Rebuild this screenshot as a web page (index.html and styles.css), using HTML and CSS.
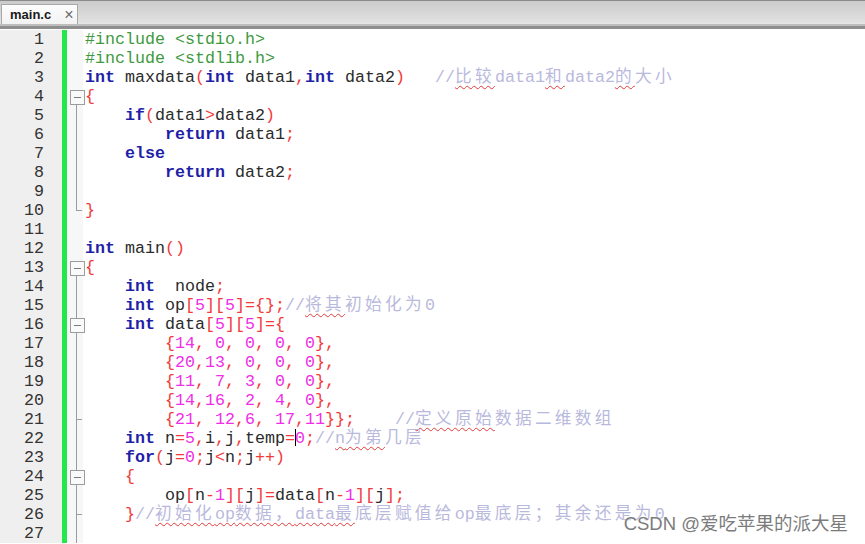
FILE: index.html
```html
<!DOCTYPE html>
<html lang="zh">
<head>
  <meta charset="UTF-8">
  <title>main.c</title>
  <link rel="stylesheet" href="styles.css">
</head>
<body>

<div class="tabbar">
  <div class="tab"><span class="tab-name">main.c</span><span class="tab-close">×</span></div>
</div>

<div class="editor">
  <div class="row"><span class="num">1</span><span class="bar"></span><span class="f"></span><span class="code"><span class="p">#include &lt;stdio.h&gt;</span></span></div>
  <div class="row"><span class="num">2</span><span class="bar"></span><span class="f"></span><span class="code"><span class="p">#include &lt;stdlib.h&gt;</span></span></div>
  <div class="row"><span class="num">3</span><span class="bar"></span><span class="f"></span><span class="code"><span class="k">int</span> maxdata<span class="o">(</span><span class="k">int</span> data1<span class="o">,</span><span class="k">int</span> data2<span class="o">)</span>   <span class="c">//<span class="z u">比较</span>data1<span class="z u">和</span>data2<span class="z"><span class="u">的</span>大小</span></span></span></div>
  <div class="row"><span class="num">4</span><span class="bar"></span><span class="f f-open"></span><span class="code"><span class="o">{</span></span></div>
  <div class="row"><span class="num">5</span><span class="bar"></span><span class="f f-line"></span><span class="code">    <span class="k">if</span><span class="o">(</span>data1<span class="o">&gt;</span>data2<span class="o">)</span></span></div>
  <div class="row"><span class="num">6</span><span class="bar"></span><span class="f f-line"></span><span class="code">        <span class="k">return</span> data1<span class="o">;</span></span></div>
  <div class="row"><span class="num">7</span><span class="bar"></span><span class="f f-line"></span><span class="code">    <span class="k">else</span></span></div>
  <div class="row"><span class="num">8</span><span class="bar"></span><span class="f f-line"></span><span class="code">        <span class="k">return</span> data2<span class="o">;</span></span></div>
  <div class="row"><span class="num">9</span><span class="bar"></span><span class="f f-line"></span><span class="code"></span></div>
  <div class="row"><span class="num">10</span><span class="bar"></span><span class="f f-end"></span><span class="code"><span class="o">}</span></span></div>
  <div class="row"><span class="num">11</span><span class="bar"></span><span class="f"></span><span class="code"></span></div>
  <div class="row"><span class="num">12</span><span class="bar"></span><span class="f"></span><span class="code"><span class="k">int</span> main<span class="o">()</span></span></div>
  <div class="row"><span class="num">13</span><span class="bar"></span><span class="f f-open"></span><span class="code"><span class="o">{</span></span></div>
  <div class="row"><span class="num">14</span><span class="bar"></span><span class="f f-line"></span><span class="code">    <span class="k">int</span>  node<span class="o">;</span></span></div>
  <div class="row"><span class="num">15</span><span class="bar"></span><span class="f f-line"></span><span class="code">    <span class="k">int</span> op<span class="o">[</span><span class="n">5</span><span class="o">][</span><span class="n">5</span><span class="o">]={};</span><span class="c">//<span class="z"><span class="u">将其</span>初始化为</span>0</span></span></div>
  <div class="row"><span class="num">16</span><span class="bar"></span><span class="f f-open f-inner"></span><span class="code">    <span class="k">int</span> data<span class="o">[</span><span class="n">5</span><span class="o">][</span><span class="n">5</span><span class="o">]={</span></span></div>
  <div class="row"><span class="num">17</span><span class="bar"></span><span class="f f-line"></span><span class="code">        <span class="o">{</span><span class="n">14</span><span class="o">,</span> <span class="n">0</span><span class="o">,</span> <span class="n">0</span><span class="o">,</span> <span class="n">0</span><span class="o">,</span> <span class="n">0</span><span class="o">},</span></span></div>
  <div class="row"><span class="num">18</span><span class="bar"></span><span class="f f-line"></span><span class="code">        <span class="o">{</span><span class="n">20</span><span class="o">,</span><span class="n">13</span><span class="o">,</span> <span class="n">0</span><span class="o">,</span> <span class="n">0</span><span class="o">,</span> <span class="n">0</span><span class="o">},</span></span></div>
  <div class="row"><span class="num">19</span><span class="bar"></span><span class="f f-line"></span><span class="code">        <span class="o">{</span><span class="n">11</span><span class="o">,</span> <span class="n">7</span><span class="o">,</span> <span class="n">3</span><span class="o">,</span> <span class="n">0</span><span class="o">,</span> <span class="n">0</span><span class="o">},</span></span></div>
  <div class="row"><span class="num">20</span><span class="bar"></span><span class="f f-line"></span><span class="code">        <span class="o">{</span><span class="n">14</span><span class="o">,</span><span class="n">16</span><span class="o">,</span> <span class="n">2</span><span class="o">,</span> <span class="n">4</span><span class="o">,</span> <span class="n">0</span><span class="o">},</span></span></div>
  <div class="row"><span class="num">21</span><span class="bar"></span><span class="f f-tick"></span><span class="code">        <span class="o">{</span><span class="n">21</span><span class="o">,</span> <span class="n">12</span><span class="o">,</span><span class="n">6</span><span class="o">,</span> <span class="n">17</span><span class="o">,</span><span class="n">11</span><span class="o">}};</span>    <span class="c">//<span class="z"><span class="u">定义原始</span>数据二维数组</span></span></span></div>
  <div class="row"><span class="num">22</span><span class="bar"></span><span class="f f-line"></span><span class="code">    <span class="k">int</span> n<span class="o">=</span><span class="n">5</span><span class="o">,</span>i<span class="o">,</span>j<span class="o">,</span>temp<span class="o">=</span><span class="caret"></span><span class="n">0</span><span class="o">;</span><span class="c">//<span class="u">n<span class="z">为第</span></span><span class="z">几层</span></span></span></div>
  <div class="row"><span class="num">23</span><span class="bar"></span><span class="f f-line"></span><span class="code">    <span class="k">for</span><span class="o">(</span>j<span class="o">=</span><span class="n">0</span><span class="o">;</span>j<span class="o">&lt;</span>n<span class="o">;</span>j<span class="o">++)</span></span></div>
  <div class="row"><span class="num">24</span><span class="bar"></span><span class="f f-open f-inner"></span><span class="code">    <span class="o">{</span></span></div>
  <div class="row"><span class="num">25</span><span class="bar"></span><span class="f f-line"></span><span class="code">        op<span class="o">[</span>n<span class="o">-</span><span class="n">1</span><span class="o">][</span>j<span class="o">]=</span>data<span class="o">[</span>n<span class="o">-</span><span class="n">1</span><span class="o">][</span>j<span class="o">];</span></span></div>
  <div class="row"><span class="num">26</span><span class="bar"></span><span class="f f-tick"></span><span class="code">    <span class="o">}</span><span class="c">//<span class="u"><span class="z">初始化</span>op<span class="z">数据，</span>data<span class="z">最</span></span><span class="z">底层赋值给</span>op<span class="z">最底层；其余还是为</span>0</span></span></div>
  <div class="row"><span class="num">27</span><span class="bar"></span><span class="f f-line"></span><span class="code"></span></div>
</div>

<div class="watermark">CSDN @爱吃苹果的派大星</div>

</body>
</html>
```

FILE: styles.css
```css
* {
  box-sizing: border-box;
}

body {
  margin: 0;
  width: 865px;
  height: 544px;
  overflow: hidden;
  background: #fff;
  position: relative;
}

/* tab bar */
.tabbar {
  height: 30px;
  border-top: 1px solid #8a8a8a;
  background:
    linear-gradient(#e6e6e6, #e6e6e6) 0 22px / 100% 1px no-repeat,
    linear-gradient(#bdbdbd, #bdbdbd) 0 23px / 100% 2px no-repeat,
    linear-gradient(#8e8e8e, #8e8e8e) 0 25px / 100% 3px no-repeat,
    linear-gradient(#fff, #fff) 0 28px / 100% 1px no-repeat,
    linear-gradient(#cbcbcb, #e2e2e2 22px);
  display: flex;
  align-items: flex-start;
  padding-left: 1px;
}

.tab {
  margin-top: 3px;
  height: 20px;
  width: 77px;
  background: linear-gradient(#fdfdfd, #f2f2f2);
  border: 1px solid #a8a8a8;
  border-bottom: none;
  display: flex;
  align-items: center;
  padding-left: 8px;
  font-family: "Liberation Sans", Arial, sans-serif;
}

.tab-name {
  font-size: 13px;
  font-weight: bold;
  color: #1a1a1a;
}

.tab-close {
  margin-left: 13px;
  font-size: 16px;
  color: #6a6a6a;
}

/* editor */
.editor {
  font-family: "Liberation Mono", "Noto Sans CJK SC", monospace;
  font-size: 16.67px;
  color: #2b2b2b;
}

.row {
  display: grid;
  grid-template-columns: 62px 5px 16px 1fr;
  height: 19px;
  line-height: 19px;
}

.num {
  background: #efefef;
  text-align: right;
  padding-right: 18px;
  color: #333;
}

.bar {
  background: #22e84c;
}

.f {
  position: relative;
  background: #f7f7f7;
}

.f-line::before,
.f-open::before,
.f-end::before,
.f-tick::before {
  content: "";
  position: absolute;
  left: 9px;
  top: 0;
  bottom: 0;
  width: 1px;
  background: #9c9c9c;
}

.f-open::before {
  top: 9px;
}

.f-open.f-inner::before {
  top: 0;
}

.f-open::after {
  content: "";
  position: absolute;
  left: 3px;
  top: 3px;
  width: 13px;
  height: 13px;
  border: 1px solid #9c9c9c;
  background: linear-gradient(#7a7a7a, #7a7a7a) center / 7px 1px no-repeat, #fafafa;
}

.f-end::before {
  bottom: 9px;
}

.f-end::after,
.f-tick::after {
  content: "";
  position: absolute;
  left: 9px;
  top: 9px;
  width: 6px;
  height: 1px;
  background: #9c9c9c;
}

.code {
  padding-left: 2px;
  white-space: pre;
}

/* syntax */
.p { color: #3f9a3f; }
.k { color: #1f1fa8; font-weight: bold; }
.o { color: #f23a3a; }
.n { color: #f02ee6; }
.c { color: #b9b9dd; }

.z {
  letter-spacing: 3.33px;
}

.u {
  text-decoration: underline wavy #e23a3a;
  text-decoration-thickness: 1px;
  text-underline-offset: 3px;
}

.caret {
  display: inline-block;
  width: 0;
  height: 17px;
  margin-right: -1px;
  border-left: 1px solid #000;
  vertical-align: -3px;
}

.watermark {
  position: absolute;
  right: 17px;
  bottom: 9px;
  font-family: "Liberation Sans", "Noto Sans CJK SC", sans-serif;
  font-size: 18.5px;
  color: #7c7c7c;
  text-shadow: 0 0 2px #fff;
}
```
